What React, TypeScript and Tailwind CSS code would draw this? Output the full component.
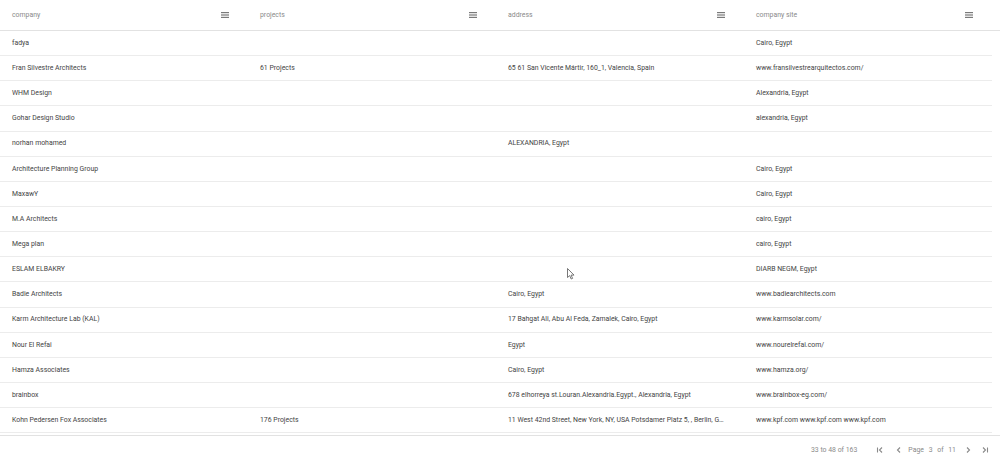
import React from 'react';

type Row = {
  company: string;
  projects: string;
  address: string;
  site: string;
};

const rows: Row[] = [
  { company: 'fadya', projects: '', address: '', site: 'Cairo, Egypt' },
  {
    company: 'Fran Silvestre Architects',
    projects: '61 Projects',
    address: '65 61 San Vicente Mártir, 160_1, Valencia, Spain',
    site: 'www.fransilvestrearquitectos.com/',
  },
  { company: 'WHM Design', projects: '', address: '', site: 'Alexandria, Egypt' },
  { company: 'Gohar Design Studio', projects: '', address: '', site: 'alexandria, Egypt' },
  { company: 'norhan mohamed', projects: '', address: 'ALEXANDRIA, Egypt', site: '' },
  { company: 'Architecture Planning Group', projects: '', address: '', site: 'Cairo, Egypt' },
  { company: 'MaxawY', projects: '', address: '', site: 'Cairo, Egypt' },
  { company: 'M.A Architects', projects: '', address: '', site: 'cairo, Egypt' },
  { company: 'Mega plan', projects: '', address: '', site: 'cairo, Egypt' },
  { company: 'ESLAM ELBAKRY', projects: '', address: '', site: 'DIARB NEGM, Egypt' },
  { company: 'Badie Architects', projects: '', address: 'Cairo, Egypt', site: 'www.badiearchitects.com' },
  {
    company: 'Karm Architecture Lab (KAL)',
    projects: '',
    address: '17 Bahgat Ali, Abu Al Feda, Zamalek, Cairo, Egypt',
    site: 'www.karmsolar.com/',
  },
  { company: 'Nour El Refai', projects: '', address: 'Egypt', site: 'www.nourelrefai.com/' },
  { company: 'Hamza Associates', projects: '', address: 'Cairo, Egypt', site: 'www.hamza.org/' },
  {
    company: 'brainbox',
    projects: '',
    address: '678 elhorreya st.Louran.Alexandria.Egypt., Alexandria, Egypt',
    site: 'www.brainbox-eg.com/',
  },
  {
    company: 'Kohn Pedersen Fox Associates',
    projects: '176 Projects',
    address: '11 West 42nd Street, New York, NY, USA Potsdamer Platz 5, , Berlin, Germany',
    site: 'www.kpf.com www.kpf.com www.kpf.com',
  },
];

const columns = ['company', 'projects', 'address', 'company site'];

function MenuIcon() {
  return (
    <svg width="8" height="6" viewBox="0 0 8 6" className="text-[#7a7a7a]">
      <rect x="0" y="0" width="8" height="1.2" fill="currentColor" />
      <rect x="0" y="2.4" width="8" height="1.2" fill="currentColor" />
      <rect x="0" y="4.8" width="8" height="1.2" fill="currentColor" />
    </svg>
  );
}

function PageIcon({ kind }: { kind: 'first' | 'prev' | 'next' | 'last' }) {
  return (
    <svg width="8" height="8" viewBox="0 0 8 8" fill="none" stroke="#8a8a8a" strokeWidth="1.1">
      {kind === 'first' && (
        <>
          <line x1="1.5" y1="1.5" x2="1.5" y2="6.5" />
          <polyline points="6,1.5 3.5,4 6,6.5" />
        </>
      )}
      {kind === 'prev' && <polyline points="5,1.5 2.5,4 5,6.5" />}
      {kind === 'next' && <polyline points="3,1.5 5.5,4 3,6.5" />}
      {kind === 'last' && (
        <>
          <polyline points="2,1.5 4.5,4 2,6.5" />
          <line x1="6.5" y1="1.5" x2="6.5" y2="6.5" />
        </>
      )}
    </svg>
  );
}

export default function App() {
  return (
    <div
      className="relative flex h-[464px] w-[1000px] flex-col overflow-hidden bg-white text-[6.9px] text-[#444]"
      style={{ fontFamily: 'Roboto, "Liberation Sans", sans-serif' }}
    >
      {/* header */}
      <div className="flex h-[31px] shrink-0 border-b border-[#e2e2e2]">
        <div className="flex w-[992px]">
          {columns.map((c) => (
            <div key={c} className="flex w-[248px] items-center justify-between pl-3 pr-[19px] text-[#8a8a8a]">
              <span>{c}</span>
              <MenuIcon />
            </div>
          ))}
        </div>
      </div>

      {/* body */}
      <div className="flex-1">
        {rows.map((r, i) => (
          <div key={i} className="flex h-[25.15px] w-[992px] items-center border-b border-[#ececec]">
            {[r.company, r.projects, r.address, r.site].map((v, j) => (
              <div key={j} className="w-[248px] truncate pl-3 pr-[17px]">
                {v}
              </div>
            ))}
          </div>
        ))}
      </div>

      {/* pagination */}
      <div className="flex h-[29px] shrink-0 items-center justify-end border-t border-[#e2e2e2] pr-[11px] text-[#8a8a8a]">
        <span className="mr-[19px]">33 to 48 of 163</span>
        <PageIcon kind="first" />
        <div className="ml-[11px] flex items-center gap-[5px]">
          <PageIcon kind="prev" />
          <span>
            Page <span className="mx-[3px]">3</span> of <span className="ml-[3px]">11</span>
          </span>
        </div>
        <div className="ml-[8px] flex items-center gap-[9px]">
          <PageIcon kind="next" />
          <PageIcon kind="last" />
        </div>
      </div>

      {/* mouse cursor */}
      <svg className="absolute left-[567px] top-[268px]" width="8" height="12" viewBox="0 0 8 12">
        <path d="M0.5 0.5 L0.5 9.5 L2.7 7.6 L4.2 11 L5.6 10.4 L4.1 7.1 L7 7.1 Z" fill="#fff" stroke="#555" strokeWidth="0.8" />
      </svg>
    </div>
  );
}
